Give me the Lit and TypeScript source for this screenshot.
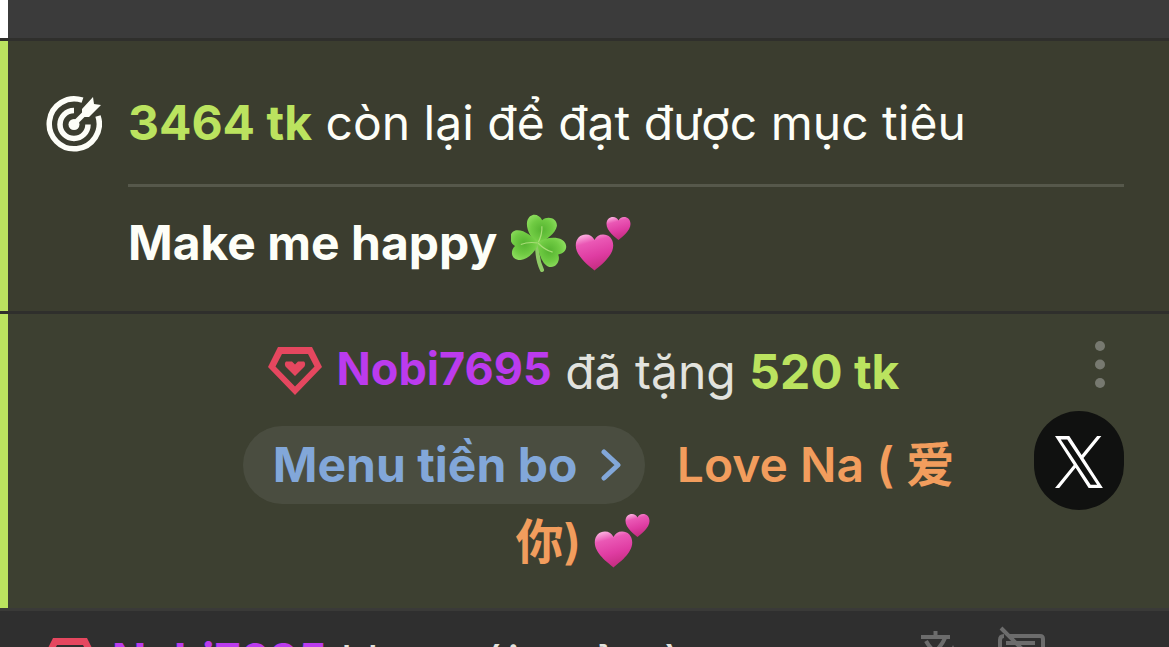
import { LitElement, html, css, svg } from "lit";
import { customElement } from "lit/decorators.js";

const gem = html`<svg class="gem" viewBox="0 0 54 48" aria-hidden="true">
  <path fill="#e5475f" fill-rule="evenodd" d="M10 0H44L54 20 27 48 0 20ZM14 7 7.500 19.500 27 39.500 46.500 19.500 40 7Z"/>
  <path fill="#e5475f" d="M27 29 17.500 19.500Q16 16.500 18 14.500H24L27 17.500 30 14.500H36Q38 16.500 36.500 19.500Z"/>
</svg>`;

const heartShape = "M50 96C36 84 2 60 2 32 2 14 14 4 28 4 38 4 46 9 50 18 54 9 62 4 72 4 86 4 98 14 98 32 98 60 64 84 50 96Z";

const hearts = html`<svg class="emoji" viewBox="0 0 58 58" role="img" aria-label="💕">
  <defs>
    <linearGradient id="pink" x1="0.300" y1="0" x2="0.600" y2="1">
      <stop offset="0" stop-color="#fbaadd"/>
      <stop offset="0.220" stop-color="#ea58b5"/>
      <stop offset="0.600" stop-color="#df3ca2"/>
      <stop offset="1" stop-color="#c22b7d"/>
    </linearGradient>
  </defs>
  <g transform="translate(0 19) scale(.39)"><path fill="url(#pink)" d=${heartShape}/></g>
  <g transform="translate(31 2) scale(.25)"><path fill="url(#pink)" d=${heartShape}/></g>
</svg>`;

const leaf = (angle: number) => svg`<g transform="rotate(${angle} 27 29)">
  <path fill="url(#leaf)" d="M27 30C20 25 14 16 15 8 17 -1 26 -1 30 6 35 1 45 3 45 11 44 19 35 25 27 30Z"/>
  <path fill="none" stroke="#a9dd77" stroke-width="1.200" d="M27 29Q31 20 30 12"/>
</g>`;

const shamrock = html`<svg class="emoji" viewBox="0 0 58 58" role="img" aria-label="☘️">
  <defs>
    <radialGradient id="leaf" cx="0.500" cy="0.500" r="0.650">
      <stop offset="0" stop-color="#55b330"/>
      <stop offset="0.550" stop-color="#70cb43"/>
      <stop offset="1" stop-color="#96e266"/>
    </radialGradient>
  </defs>
  <path fill="none" stroke="#8fca66" stroke-width="4" stroke-linecap="round" d="M26 30C26 38 27 48 31 56"/>
  ${leaf(3)}${leaf(-105)}${leaf(112)}
</svg>`;

@customElement("app-root")
export class AppRoot extends LitElement {
  static styles = css`
    :host {
      display: block;
      height: 100vh;
      overflow: hidden;
      background: #2f2f2c;
      color: #fdfef8;
      font-family: Inter, "Noto Sans CJK SC", sans-serif;
      font-size: 48px;
      line-height: 60px;
    }
    * { box-sizing: border-box; }
    p { margin: 0; }
    svg { display: block; }
    button {
      border: 0;
      padding: 0;
      background: none;
      color: inherit;
      font: inherit;
      cursor: pointer;
    }
    .feed {
      display: flex;
      flex-direction: column;
    }
    .previous {
      height: 38px;
      margin-bottom: 3px;
      background: #3b3b3b;
      border-left: 8px solid #fff;
    }
    .goal {
      display: grid;
      grid-template-columns: 56px 1fr;
      column-gap: 26px;
      margin-bottom: 3px;
      padding: 52px 45px 38px 38px;
      background: #3b3d2f;
      border-left: 8px solid #bbe35f;
    }
    .target { width: 56px; height: 60px; }
    .remaining {
      padding-bottom: 31px;
      border-bottom: 3px solid #56584b;
    }
    .topic {
      display: flex;
      align-items: center;
      padding-top: 26px;
      font-weight: 700;
    }
    .topic .emoji:first-of-type { margin: 0 6px 0 14px; }
    .amount { color: #bbe35f; font-weight: 700; }
    .tip {
      display: grid;
      grid-template-columns: 1fr 90px;
      column-gap: 60px;
      padding: 20px 45px 28px 185px;
      background: #3d4031;
      border-left: 8px solid #bbe35f;
      color: #e2e3de;
    }
    .text { text-align: center; line-height: 76px; }
    .gem { width: 54px; height: 48px; margin-top: 4px; }
    .user {
      display: inline-flex;
      align-items: center;
      gap: 15px;
      vertical-align: -6px;
      color: #bb3bee;
      font-size: 45px;
      font-weight: 700;
      line-height: 48px;
      text-decoration: none;
    }
    .menu {
      display: inline-flex;
      align-items: center;
      gap: 24px;
      height: 78px;
      margin: 16px 18px 0 30px;
      padding: 0 24px 0 30px;
      border-radius: 39px;
      background: #4a4d40;
      color: #82a7d9;
      font-weight: 700;
    }
    .chevron { width: 20px; height: 32px; }
    .title { color: #f29d5d; font-weight: 600; }
    .text .emoji { display: inline-block; vertical-align: -10px; }
    .emoji { width: 58px; height: 58px; }
    .actions {
      display: flex;
      flex-direction: column;
      align-items: flex-end;
      gap: 23px;
    }
    .more { padding: 6px 18px 0; }
    .dots { width: 12px; height: 48px; }
    .close {
      display: grid;
      place-items: center;
      width: 90px;
      height: 99px;
      padding-top: 3px;
      border-radius: 45px;
      background: #101110;
    }
    .logo { width: 48px; height: 52px; }
    .next {
      display: flex;
      align-items: flex-start;
      justify-content: space-between;
      padding: 14px 122px 0 43px;
      background: #2f2f2f;
      border-top: 3px solid #3a3a38;
      color: #e2e3de;
      line-height: 76px;
      white-space: nowrap;
    }
    .tools { display: flex; gap: 28px; color: #6c6c6c; }
    .tool { width: 50px; height: 50px; }
  `;

  render() {
    return html`<main class="feed">
      <div class="previous"></div>
      <section class="goal">
        <svg class="target" viewBox="0 0 56 60" aria-hidden="true">
          <g fill="none" stroke="#fdfef8">
            <path stroke-width="5.500" d="M36.500 7.200A25 25 0 1 0 52 23"/>
            <path stroke-width="5.500" d="M28 17.500A14 14 0 1 0 42 31.500"/>
            <path stroke-width="5" d="M28 31 40 19"/>
          </g>
          <circle cx="28" cy="31.500" r="5.500" fill="#fdfef8"/>
          <path fill="#fdfef8" d="M36 16 47 4 48 11 55 12 43 24H36Z"/>
        </svg>
        <div>
          <p class="remaining"><span class="amount">3464 tk</span> còn lại để đạt được mục tiêu</p>
          <p class="topic">Make me happy ${shamrock}${hearts}</p>
        </div>
      </section>
      <section class="tip">
        <p class="text">
          <a class="user" href="#user">${gem}Nobi7695</a>
          đã tặng <span class="amount">520 tk</span>
          <button class="menu">Menu tiền bo<svg class="chevron" viewBox="0 0 20 32" aria-hidden="true"><path d="M3 3 17 16 3 29" fill="none" stroke="currentColor" stroke-width="5" stroke-linecap="round" stroke-linejoin="round"/></svg></button>
          <span class="title">Love Na ( 爱你) ${hearts}</span>
        </p>
        <div class="actions">
          <button class="more" aria-label="Thêm">
            <svg class="dots" viewBox="0 0 12 48" fill="#777970"><circle cx="6" cy="6" r="5"/><circle cx="6" cy="24.500" r="5"/><circle cx="6" cy="43" r="5"/></svg>
          </button>
          <button class="close" aria-label="X">
            <svg class="logo" viewBox="0 0 24 24" preserveAspectRatio="none" fill="#fff"><path d="M14.258 10.152L23.176 0h-2.113l-7.747 8.813L7.133 0H0l9.352 13.328L0 23.973h2.113l8.176-9.309 6.531 9.309h7.133zm-2.895 3.293l-.949-1.328L2.875 1.560h3.246l6.086 8.523.945 1.328 7.910 11.078h-3.246z"/></svg>
          </button>
        </div>
      </section>
      <section class="next">
        <p><a class="user" href="#user">${gem}Nobi7695</a> khe mới quả nào</p>
        <div class="tools">
          <button aria-label="Dịch">
            <svg class="tool" viewBox="0 0 50 50" fill="none" stroke="currentColor" stroke-width="4"><path d="M2 12H31M16.500 6V12M7 16Q13 27 26 33M26 13Q20 27 3 35M22 52 34 25 46 52M26 43H42"/></svg>
          </button>
          <button aria-label="Ẩn tin nhắn">
            <svg class="tool" viewBox="0 0 50 50" fill="none" stroke="currentColor" stroke-width="4"><path d="M12 11H43Q46 11 46 14V43H3V15Q3 11 7 11M9 18H38M4 3 46 45"/></svg>
          </button>
        </div>
      </section>
    </main>`;
  }
}
